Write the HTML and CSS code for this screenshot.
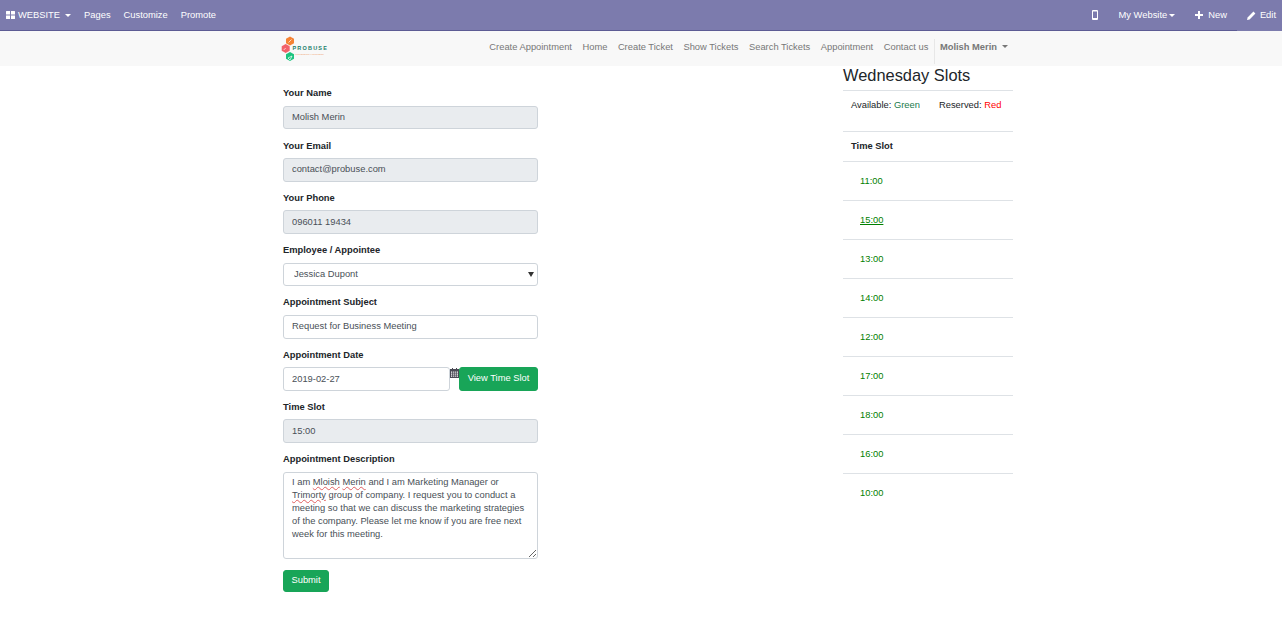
FILE: index.html
```html
<!DOCTYPE html>
<html lang="en">
<head>
    <meta charset="UTF-8">
    <meta name="viewport" content="width=device-width, initial-scale=1.0">
    <title>Appointment</title>
    <link rel="stylesheet" href="styles.css">
</head>
<body>
    <!-- Top admin bar -->
    <div class="admin-bar">
        <div class="admin-main">
            <a class="admin-brand">
                <svg class="apps-icon" width="9" height="8" viewBox="0 0 9 8"><path d="M0 0.5a.5 .5 0 0 1 .5-.5H4v3.6H0zM5 0h3.5a.5 .5 0 0 1 .5 .5v3.100H5zM0 4.400h4V8H.5a.5 .5 0 0 1-.5-.5zM5 4.400h4v3.100a.5 .5 0 0 1-.5 .5H5z" fill="#fff"/></svg>
                WEBSITE<span class="caret caret-brand"></span>
            </a>
            <a class="admin-link">Pages</a>
            <a class="admin-link">Customize</a>
            <a class="admin-link">Promote</a>
            <div class="admin-right">
                <svg class="phone-icon" width="6" height="10" viewBox="0 0 6 10"><path fill-rule="evenodd" d="M1 0h4a1 1 0 0 1 1 1v8a1 1 0 0 1-1 1H1a1 1 0 0 1-1-1V1a1 1 0 0 1 1-1zM1 1.500v6.500h4V1.500z" fill="#fff"/></svg>
                <a class="admin-link site-link">My Website<span class="caret"></span></a>
                <a class="admin-link new-link">
                    <svg width="8" height="8" viewBox="0 0 8 8"><path d="M3 0h2v3h3v2H5v3H3V5H0V3h3z" fill="#fff"/></svg>
                    New
                </a>
            </div>
        </div>
        <a class="admin-link edit-link">
            <svg width="9" height="9" viewBox="0 0 9 9"><path d="M6.400 .6l2 2-5.800 5.800L0 9l.6-2.600z" fill="#fff"/></svg>
            Edit
        </a>
    </div>

    <!-- Site navigation -->
    <nav class="site-nav">
        <div class="container nav-inner">
            <svg class="logo" width="48" height="28" viewBox="0 0 48 28">
                <polygon points="9,1.500 13,3.800 13,8.200 9,10.500 5,8.200 5,3.800" fill="#f58233"/>
                <polygon points="4.700,9 8.700,11.300 8.700,15.700 4.700,18 .7,15.700 .7,11.300" fill="#f2616a"/>
                <polygon points="9,17 13,19.300 13,23.700 9,26 5,23.700 5,19.300" fill="#1cc47f"/>
                <path d="M7.500 7.500l3-3M2.700 15l2-2M7 23l4-2-2 4z" stroke="#fff" stroke-width=".7" fill="none"/>
                <text x="11.500" y="14.700" class="logo-name">PROBUSE</text>
                <text x="14" y="19.500" class="logo-sub">PROFESSIONAL BUSINESS</text>
            </svg>
            <ul class="nav-list">
                <li><a>Create Appointment</a></li>
                <li><a>Home</a></li>
                <li><a>Create Ticket</a></li>
                <li><a>Show Tickets</a></li>
                <li><a>Search Tickets</a></li>
                <li><a>Appointment</a></li>
                <li><a>Contact us</a></li>
                <li class="nav-user"><a>Molish Merin<span class="caret caret-user"></span></a></li>
            </ul>
        </div>
    </nav>

    <div class="container content">
        <form class="appointment-form">
            <div class="form-group">
                <label>Your Name</label>
                <input class="form-control" type="text" value="Molish Merin" readonly>
            </div>
            <div class="form-group">
                <label>Your Email</label>
                <input class="form-control" type="text" value="contact@probuse.com" readonly>
            </div>
            <div class="form-group">
                <label>Your Phone</label>
                <input class="form-control" type="text" value="096011 19434" readonly>
            </div>
            <div class="form-group">
                <label>Employee / Appointee</label>
                <div class="select-wrap">
                    <select class="form-control select-control">
                        <option>Jessica Dupont</option>
                    </select>
                </div>
            </div>
            <div class="form-group">
                <label>Appointment Subject</label>
                <input class="form-control editable" type="text" value="Request for Business Meeting">
            </div>
            <div class="form-group">
                <label>Appointment Date</label>
                <div class="date-row">
                    <input class="form-control editable date-input" type="text" value="2019-02-27">
                    <svg class="calendar-icon" width="9" height="10" viewBox="0 0 9 10"><path fill-rule="evenodd" d="M2 0h1v1h3V0h1v1h2v9H0V1h2zM1 3.500v1.200h1.200V3.500zM3.200 3.500v1.200h1.100V3.500zM5.200 3.500v1.200h1.100V3.500zM7 3.500v1.200h1V3.500zM1 5.500v1.200h1.200V5.500zM3.200 5.500v1.200h1.100V5.500zM5.200 5.500v1.200h1.100V5.500zM7 5.500v1.200h1V5.500zM1 7.500v1.200h1.200V7.500zM3.200 7.500v1.200h1.100V7.500zM5.200 7.500v1.200h1.100V7.500zM7 7.500v1.200h1V7.500z" fill="#4a4a55"/></svg>
                    <button class="btn btn-view" type="button">View Time Slot</button>
                </div>
            </div>
            <div class="form-group">
                <label>Time Slot</label>
                <input class="form-control" type="text" value="15:00" readonly>
            </div>
            <div class="form-group">
                <label>Appointment Description</label>
                <div class="form-control editable description">I am <span class="misspelt">Mloish</span> <span class="misspelt">Merin</span> and I am Marketing Manager or <span class="misspelt">Trimorty</span> group of company. I request you to conduct a meeting so that we can discuss the marketing strategies of the company. Please let me know if you are free next week for this meeting.</div>
            </div>
            <button class="btn btn-submit" type="button">Submit</button>
        </form>

        <aside class="slots">
            <h3>Wednesday Slots</h3>
            <p class="legend">
                <span class="legend-item">Available: <span class="green">Green</span></span>
                <span>Reserved: <span class="red">Red</span></span>
            </p>
            <div class="slot-head">Time Slot</div>
            <div class="slot">11:00</div>
            <div class="slot"><a class="selected">15:00</a></div>
            <div class="slot">13:00</div>
            <div class="slot">14:00</div>
            <div class="slot">12:00</div>
            <div class="slot">17:00</div>
            <div class="slot">18:00</div>
            <div class="slot">16:00</div>
            <div class="slot">10:00</div>
        </aside>
    </div>
</body>
</html>
```

FILE: styles.css
```css
* {
    box-sizing: border-box;
}
html, body {
    overflow: hidden;
}
body {
    margin: 0;
    height: 622px;
    background: white;
    font-family: "Liberation Sans", Arial, sans-serif;
    font-size: 9.36px;
    line-height: 14.625px;
    color: #212529;
}
.container {
    width: 730px;
    margin-left: 283px;
}
.caret {
    display: inline-block;
    margin-left: 2px;
    vertical-align: 2px;
    border-top: 3px solid #fff;
    border-left: 3px solid transparent;
    border-right: 3px solid transparent;
}

/* admin bar */
.admin-bar {
    display: flex;
    height: 31px;
    background: #7c7bad;
    color: #fff;
}
.admin-main {
    flex: 1;
    display: flex;
    align-items: center;
    padding: 0 0 0 6px;
    border-bottom: 1px solid #5c5b94;
}
.admin-brand {
    display: flex;
    align-items: center;
    margin-right: 13px;
}
.apps-icon {
    margin-right: 3px;
}
.caret-brand {
    margin-left: 5px;
    vertical-align: 0;
}
.admin-link {
    display: flex;
    align-items: center;
    margin-right: 13px;
}
.admin-right {
    margin-left: auto;
    display: flex;
    align-items: center;
}
.phone-icon {
    margin-right: 21px;
}
.site-link {
    margin-right: 20px;
}
.new-link {
    margin-right: 10px;
}
.new-link svg {
    margin-right: 5px;
}
.edit-link {
    padding: 0 6px 0 10px;
    margin: 0;
}
.edit-link svg {
    margin-right: 4px;
}

/* site nav */
.site-nav {
    height: 35px;
    background: #f8f8f8;
}
.nav-inner {
    display: flex;
    align-items: center;
    justify-content: space-between;
    height: 100%;
}
.logo {
    margin-left: -2px;
}
.logo-name {
    font-size: 5.500px;
    font-weight: bold;
    letter-spacing: 1.200px;
    fill: #1b7d6b;
}
.logo-sub {
    font-size: 2.200px;
    fill: #f0a878;
}
.nav-list {
    display: flex;
    align-items: center;
    margin: 5px 0 0;
    padding: 0;
    list-style: none;
    color: #777;
}
.nav-list li {
    display: flex;
    align-items: center;
    height: 25px;
    padding: 0 5.250px 7px;
}
.nav-list .nav-user {
    border-left: 1px solid #e7e7e7;
    font-weight: bold;
    padding-right: 5px;
}
.caret-user {
    margin-left: 5px;
    border-top-color: #777;
}

/* form */
.content {
    display: flex;
    justify-content: space-between;
    align-items: flex-start;
}
.appointment-form {
    width: 255px;
    padding-top: 20.300px;
}
.form-group {
    margin-bottom: 9.200px;
}
label {
    display: block;
    margin-bottom: 4.875px;
    font-weight: bold;
}
.form-control {
    display: block;
    width: 100%;
    height: 23.600px;
    padding: 0 8px 1px;
    border: 1px solid #ced4da;
    border-radius: 3px;
    background: #e9ecef;
    color: #495057;
    font-family: inherit;
    font-size: 9.36px;
}
.editable, .select-control {
    background: white;
}
.select-wrap {
    position: relative;
}
.select-wrap::after {
    content: "";
    position: absolute;
    right: 4.500px;
    top: 9px;
    border-top: 5px solid #333;
    border-left: 3px solid transparent;
    border-right: 3px solid transparent;
}
.select-control {
    appearance: none;
    padding-left: 10px;
}
.date-row {
    display: flex;
    align-items: flex-start;
    height: 23.600px;
}
.date-input {
    width: 167px;
    height: 24px;
    padding-bottom: 0;
}
.calendar-icon {
    flex: none;
    margin-top: 1px;
}
.btn {
    border: 1px solid #18a558;
    border-radius: 3px;
    background: #18a558;
    color: white;
    font-family: inherit;
    font-size: 9.36px;
    padding: 0 0 2px;
}
.btn-view {
    width: 79px;
    height: 24px;
}
.description {
    height: 87px;
    padding: 3px 8px;
    line-height: 13px;
    overflow: auto;
    resize: vertical;
}
.misspelt {
    text-decoration: underline wavy #e06060 0.7px;
    text-underline-offset: 1px;
}
.btn-submit {
    display: block;
    width: 46px;
    height: 22px;
    margin-top: 11px;
}

/* slots */
.slots {
    width: 170px;
}
.slots h3 {
    margin: 0;
    height: 25px;
    border-bottom: 1px solid #dee2e6;
    font-size: 16.400px;
    font-weight: normal;
    line-height: 19px;
}
.legend {
    display: flex;
    height: 40px;
    margin: 0;
    padding: 7px 8px 0;
}
.legend-item {
    width: 88px;
}
.green {
    color: #1a7a4c;
}
.red {
    color: #f00;
}
.slot-head {
    height: 30px;
    padding: 7px 8px 0;
    border-top: 1px solid #dee2e6;
    font-weight: bold;
}
.slot {
    height: 39px;
    padding: 11.500px 17px 0;
    border-top: 1px solid #dee2e6;
    color: #008000;
}
.slot .selected {
    text-decoration: underline;
}
```
